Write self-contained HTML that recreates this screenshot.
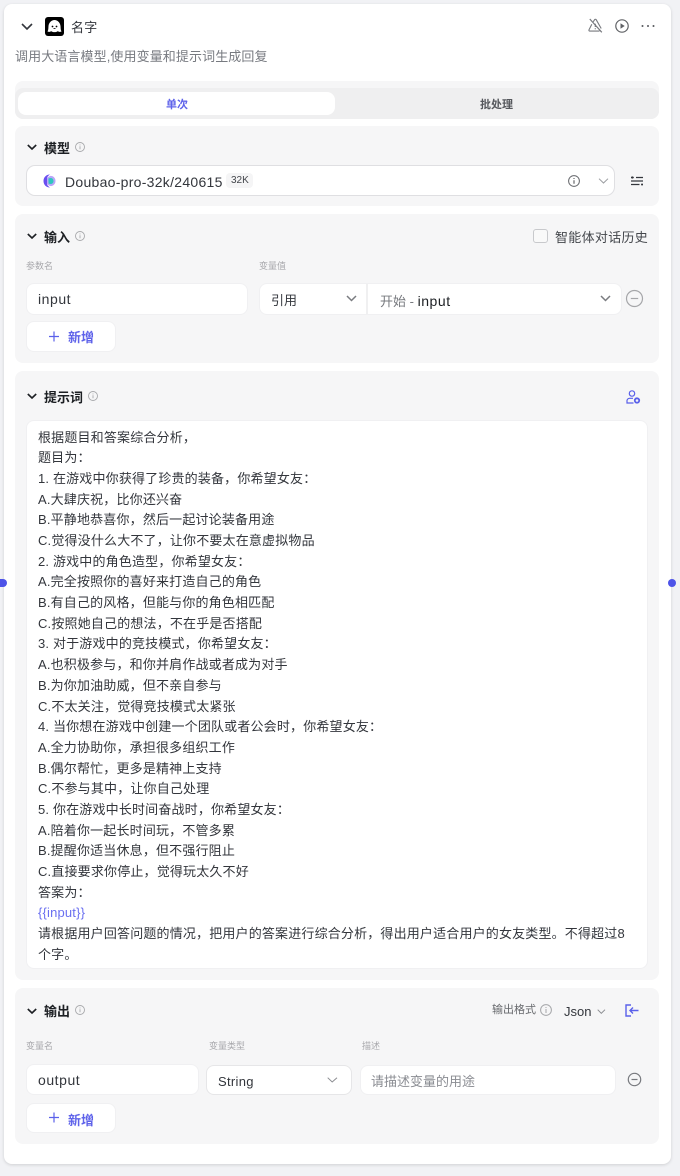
<!DOCTYPE html>
<html lang="zh"><head><meta charset="utf-8"><style>
html,body{margin:0;padding:0;width:680px;height:1176px;overflow:hidden;background:#f1f2f5}
body{position:relative;font-family:"Liberation Sans","Noto Sans CJK SC",sans-serif;color:#1c1f23}
.a{position:absolute;white-space:pre;line-height:18px}
.b{position:absolute;box-sizing:border-box}
.sec{position:absolute;left:15px;width:644px;background:#f6f6f7;border-radius:8px}
.box{position:absolute;box-sizing:border-box;background:#fff;border:1px solid #f0f0f2;border-radius:8px}
.t{font-size:13px;font-weight:700;color:#1c1f23}
.lab{font-size:9px;color:#a8a8ac}
.val{font-size:14px;letter-spacing:.55px;color:#33363c}
svg{position:absolute;overflow:visible}
</style></head><body>
<div class="b" style="left:4px;top:4px;width:667px;height:1160px;background:#fff;border-radius:8px;box-shadow:0 1px 3px rgba(0,0,0,.14)"></div>
<div class="b" style="left:0;top:579px;width:7px;height:8px;border-radius:0 4px 4px 0;background:#4d53e8"></div>
<div class="b" style="left:668px;top:579px;width:8px;height:8px;border-radius:4px;background:#4d53e8"></div>

<!-- header -->
<svg style="left:21px;top:23px" width="12" height="8" fill="none" stroke="#33363c" stroke-width="1.600"><path d="M1 1l5 5 5-5"/></svg>
<div class="b" style="left:45px;top:17px;width:19px;height:19px;border-radius:3px;background:#000"></div>
<svg style="left:45px;top:17px" width="19" height="19"><path d="M2.500 14.500C3.500 13 3.300 11 3.500 9c.3-3.500 3-6 6-6s5.700 2.500 6 6c.2 2 0 4 1 5.500-1.500.8-3 .2-3.800-.4-1 1.400-5.400 1.400-6.400 0-.8.600-2.300 1.200-3.800.4z" fill="#fff"/><circle cx="7.500" cy="9.500" r=".9"/><circle cx="11.500" cy="9.500" r=".9"/><path d="M8.500 11.500h2" stroke="#000" stroke-width=".8"/></svg>
<div class="a" style="left:71px;top:19px;font-size:13px;letter-spacing:.2px;color:#33363c">名字</div>
<svg style="left:588px;top:18px" width="15" height="15" fill="none" stroke="#77797e" stroke-width="1.100"><path d="M5.200 3.800L6.600 1.700c.4-.6 1.200-.6 1.600 0l5 8.800M3.800 6.300L1 11.800c-.3.700.1 1.300.8 1.300h9.700"/><path d="M1.800 1l12 13.300M7.300 5.800v3.200M7.300 10.300v1" stroke-width="1.200"/></svg>
<svg style="left:615px;top:19px" width="14" height="14" fill="none" stroke="#606266" stroke-width="1.200"><circle cx="7" cy="7" r="6.200"/><path d="M5.500 4.300v5.400L9.700 7z" fill="#606266" stroke="none"/></svg>
<svg style="left:641px;top:24px" width="14" height="4" fill="#55575c"><circle cx="1.500" cy="2" r="1"/><circle cx="7" cy="2" r="1"/><circle cx="12.500" cy="2" r="1"/></svg>
<div class="a" style="left:15px;top:48px;font-size:13px;letter-spacing:.1px;color:#777a80">调用大语言模型,使用变量和提示词生成回复</div>

<!-- tabs -->
<div class="sec" style="top:81px;height:38px"></div>
<div class="b" style="left:15px;top:88px;width:644px;height:31px;background:#efeff0;border-radius:8px"></div>
<div class="b" style="left:18px;top:92px;width:317px;height:23px;background:#fff;border-radius:8px"></div>
<div class="a" style="left:166px;top:96px;font-size:11px;font-weight:700;color:#5f63ea">单次</div>
<div class="a" style="left:480px;top:96px;font-size:11px;font-weight:700;color:#55575c">批处理</div>

<!-- model -->
<div class="sec" style="top:126px;height:80px"></div>
<svg style="left:27px;top:144px" width="10" height="7" fill="none" stroke="#1c1f23" stroke-width="1.600"><path d="M.8 1l4.200 4 4.200-4"/></svg>
<div class="a t" style="left:44px;top:140px">模型</div>
<svg style="left:75px;top:142px" width="10" height="10" fill="none" stroke="#a8a9ac" stroke-width=".9"><circle cx="5" cy="5" r="4.500"/><path d="M5 4.200v3M5 2.500v.9"/></svg>
<div class="box" style="left:26px;top:165px;width:589px;height:31px;border:1px solid #dfdfe2;border-radius:9px"></div>
<svg style="left:43px;top:174px" width="13" height="14"><path d="M7 .5C3 .5.500 3.500.500 7s2.500 6.500 6.500 6.500c-1.500-1-2.500-2-3-3V3.500C5 2 6 1 7 .5z" fill="#6a4df0"/><path d="M4 3.500l3-1.500c3-.5 5.500 2 5.500 5S10 12.500 7 12L4 10.500z" fill="#b9a6f8"/><path d="M5.500 4.500c2-1.200 5-.5 5 2.500s-3 3.700-5 2.500z" fill="#2fc6c0"/></svg>
<div class="a" style="left:65px;top:173px;font-size:14px;letter-spacing:.28px;color:#33363c">Doubao-pro-32k/240615</div>
<div class="b" style="left:226px;top:173px;width:27px;height:15px;background:#f5f5f6;border-radius:4px"></div>
<div class="a" style="left:231px;top:172px;font-size:10px;color:#44474c">32K</div>
<svg style="left:568px;top:175px" width="12" height="12" fill="none" stroke="#66686c" stroke-width="1"><circle cx="6" cy="6" r="5.400"/><path d="M6 5.200v3.600M6 3v1" stroke-width="1.200"/></svg>
<svg style="left:598px;top:178px" width="12" height="6" fill="none" stroke="#9a9ca0"><path d="M1 .7l4.500 4.300L10 .7"/></svg>
<svg style="left:630px;top:175px" width="14" height="12" fill="none" stroke="#33363c" stroke-width="1.200"><path d="M1 2.500h2.800M6 2.500h7M1 6h12M1 9.500h8.500M12 9.500h1"/><circle cx="2.300" cy="2.500" r="1.100" fill="#33363c" stroke="none"/><circle cx="12" cy="9.500" r="1" fill="#33363c" stroke="none"/></svg>

<!-- input -->
<div class="sec" style="top:214px;height:149px"></div>
<svg style="left:27px;top:233px" width="10" height="7" fill="none" stroke="#1c1f23" stroke-width="1.600"><path d="M.8 1l4.200 4 4.200-4"/></svg>
<div class="a t" style="left:44px;top:229px">输入</div>
<svg style="left:75px;top:231px" width="10" height="10" fill="none" stroke="#a8a9ac" stroke-width=".9"><circle cx="5" cy="5" r="4.500"/><path d="M5 4.200v3M5 2.500v.9"/></svg>
<div class="b" style="left:533px;top:229px;width:15px;height:14px;background:#f9f9f9;border:1px solid #c8c9cc;border-radius:3px"></div>
<div class="a" style="left:555px;top:229px;font-size:13px;letter-spacing:.3px;color:#44474c">智能体对话历史</div>
<div class="a lab" style="left:26px;top:257px">参数名</div>
<div class="a lab" style="left:259px;top:257px">变量值</div>
<div class="box" style="left:26px;top:283px;width:222px;height:32px"></div>
<div class="a val" style="left:38px;top:290px">input</div>
<div class="box" style="left:259px;top:283px;width:363px;height:32px"></div>
<div class="b" style="left:366px;top:284px;width:2px;height:30px;background:#f0f0f1"></div>
<div class="a" style="left:271px;top:292px;font-size:13px;color:#33363c">引用</div>
<svg style="left:346px;top:295px" width="12" height="7" fill="none" stroke="#7a7c80" stroke-width="1.500"><path d="M1 1l4.500 4.500L10 1"/></svg>
<div class="a" style="left:380px;top:292px;font-size:13px;color:#77797e">开始 - <span style="color:#1c1f23;font-size:14px;letter-spacing:.55px">input</span></div>
<svg style="left:600px;top:295px" width="12" height="7" fill="none" stroke="#7a7c80" stroke-width="1.500"><path d="M1 1l4.500 4.500L10 1"/></svg>
<svg style="left:626px;top:290px" width="18" height="18" fill="none" stroke="#a5a6a9" stroke-width="1.200"><circle cx="8.500" cy="8.500" r="8"/><path d="M4.800 8.500h7.400"/></svg>
<div class="box" style="left:26px;top:321px;width:90px;height:31px"></div>
<svg style="left:48px;top:331px" width="12" height="12" stroke="#5a60ea" stroke-width="1.200"><path d="M6 .5v10M1 5.500h10"/></svg>
<div class="a" style="left:68px;top:329px;font-size:13px;font-weight:700;color:#5f63ea">新增</div>

<!-- prompt -->
<div class="sec" style="top:371px;height:609px"></div>
<svg style="left:27px;top:393px" width="10" height="7" fill="none" stroke="#1c1f23" stroke-width="1.600"><path d="M.8 1l4.200 4 4.200-4"/></svg>
<div class="a t" style="left:44px;top:389px">提示词</div>
<svg style="left:88px;top:391px" width="10" height="10" fill="none" stroke="#a8a9ac" stroke-width=".9"><circle cx="5" cy="5" r="4.500"/><path d="M5 4.200v3M5 2.500v.9"/></svg>
<svg style="left:626px;top:390px" width="14" height="14" fill="none" stroke="#5a60ea" stroke-width="1.200"><circle cx="6" cy="3.500" r="2.700"/><path d="M7 8.300H3.500A2.500 2.500 0 0 0 1 11v2h6.500"/><circle cx="11" cy="10.500" r="2.200" stroke-width="1.800"/></svg>
<div class="box" style="left:26px;top:420px;width:622px;height:549px"></div>
<div class="b" style="left:38px;top:427.600px;width:610px;font-size:13px;letter-spacing:.17px;line-height:20.68px;color:#33363c;white-space:pre">根据题目和答案综合分析，
题目为：
1. 在游戏中你获得了珍贵的装备，你希望女友：
A.大肆庆祝，比你还兴奋
B.平静地恭喜你，然后一起讨论装备用途
C.觉得没什么大不了，让你不要太在意虚拟物品
2. 游戏中的角色造型，你希望女友：
A.完全按照你的喜好来打造自己的角色
B.有自己的风格，但能与你的角色相匹配
C.按照她自己的想法，不在乎是否搭配
3. 对于游戏中的竞技模式，你希望女友：
A.也积极参与，和你并肩作战或者成为对手
B.为你加油助威，但不亲自参与
C.不太关注，觉得竞技模式太紧张
4. 当你想在游戏中创建一个团队或者公会时，你希望女友：
A.全力协助你，承担很多组织工作
B.偶尔帮忙，更多是精神上支持
C.不参与其中，让你自己处理
5. 你在游戏中长时间奋战时，你希望女友：
A.陪着你一起长时间玩，不管多累
B.提醒你适当休息，但不强行阻止
C.直接要求你停止，觉得玩太久不好
答案为：
<span style="color:#6a6ff0">{{input}}</span>
请根据用户回答问题的情况，把用户的答案进行综合分析，得出用户适合用户的女友类型。不得超过8
个字。</div>

<!-- output -->
<div class="sec" style="top:988px;height:156px"></div>
<svg style="left:27px;top:1008px" width="10" height="7" fill="none" stroke="#1c1f23" stroke-width="1.600"><path d="M.8 1l4.200 4 4.200-4"/></svg>
<div class="a t" style="left:44px;top:1003px">输出</div>
<svg style="left:75px;top:1005px" width="10" height="10" fill="none" stroke="#a8a9ac" stroke-width=".9"><circle cx="5" cy="5" r="4.500"/><path d="M5 4.200v3M5 2.500v.9"/></svg>
<div class="a" style="left:492px;top:1001px;font-size:11px;color:#66686c">输出格式</div>
<svg style="left:540px;top:1004px" width="12" height="12" fill="none" stroke="#a5a6a9" stroke-width="1"><circle cx="6" cy="6" r="5.400"/><path d="M6 5v4M6 3v1"/></svg>
<div class="a" style="left:564px;top:1003px;font-size:13px;color:#33363c">Json</div>
<svg style="left:597px;top:1009px" width="9" height="6" fill="none" stroke="#8a8c90"><path d="M.7.7l3.600 3.600L8 .7"/></svg>
<svg style="left:625px;top:1004px" width="14" height="13" fill="none" stroke="#5a60ea" stroke-width="1.400"><path d="M6 1H1v11h5M13.500 6.500H5M8 3.500l-3 3 3 3"/></svg>
<div class="a lab" style="left:26px;top:1037px">变量名</div>
<div class="a lab" style="left:209px;top:1037px">变量类型</div>
<div class="a lab" style="left:362px;top:1037px">描述</div>
<div class="box" style="left:26px;top:1064px;width:173px;height:31px"></div>
<div class="a val" style="left:38px;top:1071px">output</div>
<div class="box" style="left:206px;top:1065px;width:146px;height:30px;border-color:#e6e6e8"></div>
<div class="a" style="left:218px;top:1073px;font-size:13px;letter-spacing:.3px;color:#33363c">String</div>
<svg style="left:327px;top:1077px" width="11" height="6" fill="none" stroke="#8a8c90"><path d="M.7.7l4.500 4.300L10 .7"/></svg>
<div class="box" style="left:360px;top:1065px;width:256px;height:30px"></div>
<div class="a" style="left:371px;top:1073px;font-size:13px;color:#8a8c92">请描述变量的用途</div>
<svg style="left:628px;top:1073px" width="14" height="14" fill="none" stroke="#77797e" stroke-width="1.200"><circle cx="6.500" cy="6.500" r="6.200"/><path d="M3.500 6.500h6"/></svg>
<div class="box" style="left:26px;top:1103px;width:90px;height:30px"></div>
<svg style="left:48px;top:1112px" width="12" height="12" stroke="#5a60ea" stroke-width="1.200"><path d="M6 .5v10M1 5.500h10"/></svg>
<div class="a" style="left:68px;top:1112px;font-size:13px;font-weight:700;color:#5f63ea">新增</div>
</body></html>
